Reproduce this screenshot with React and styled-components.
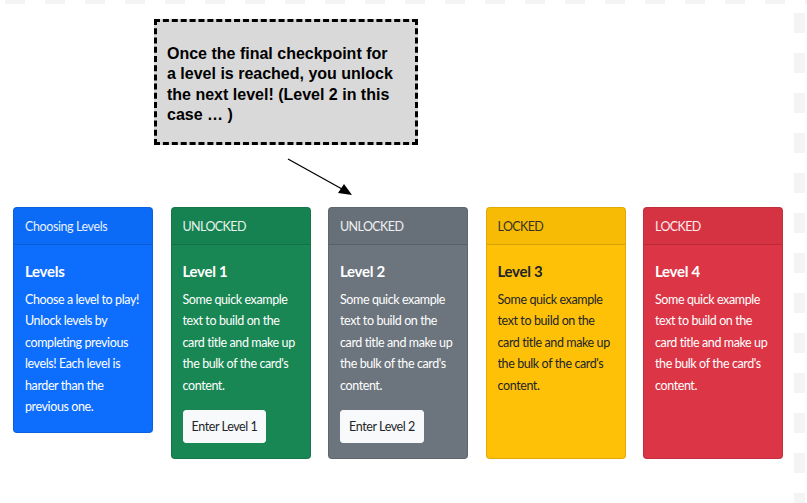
import React from 'react'
import styled, {createGlobalStyle} from "styled-components";

const GlobalStyle = createGlobalStyle`
    html, body, #root {
        height: 100%;
    }
    body {
        margin: 0;
        font-family: Lato, "Open Sans", sans-serif;
        background-color: #fff;
        background-image:
            repeating-linear-gradient(90deg, transparent 0 5px, #f4f4f4 5px 25px, transparent 25px 40px),
            repeating-linear-gradient(180deg, transparent 0 13px, #f4f4f4 13px 33px, transparent 33px 40px);
        background-size: 100% 4px, 11px 100%;
        background-position: 0 0, 794px 0;
        background-repeat: no-repeat;
    }
`;

const Page = styled.div`
    display: flex;
    flex-direction: column;
`;

const Annotation = styled.div`
    height: 207px;
    display: flex;
    flex-direction: column;
`;

const Callout = styled.div`
    margin: 19px 0 0 154px;
    width: 264px;
    height: 126px;
    box-sizing: border-box;
    background: #d9d9d9;
    border: 3px dashed #000;
    padding: 22px 17px 0 10px;
    font-family: "Liberation Sans", Arial, sans-serif;
    font-weight: bold;
    font-size: 16px;
    line-height: 20.4px;
    color: #000;
`;

const Arrow = styled.svg`
    margin: 13px 0 0 286px;
    display: block;
`;

const Deck = styled.div`
    display: flex;
    align-items: stretch;
    gap: 17.5px;
    padding-left: 13px;
`;

const palette = {
    primary: {bg: "#0d6efd", fg: "#fff"},
    success: {bg: "#198754", fg: "#fff"},
    secondary: {bg: "#6c757d", fg: "#fff"},
    warning: {bg: "#ffc107", fg: "#212529"},
    danger: {bg: "#dc3545", fg: "#fff"},
};

const Card = styled.div`
    width: 140px;
    box-sizing: border-box;
    background: ${p => palette[p.$variant].bg};
    color: ${p => palette[p.$variant].fg};
    border: 1px solid rgba(0,0,0,.12);
    border-radius: 4px;
    display: flex;
    flex-direction: column;
    align-self: ${p => p.$short ? "flex-start" : "stretch"};
    overflow: hidden;
    letter-spacing: -0.4px;
`;

const CardHeader = styled.div`
    padding: 9px 11px 7px;
    font-size: 12.5px;
    line-height: 20px;
    background: rgba(0,0,0,.03);
    border-bottom: 1px solid rgba(0,0,0,.15);
    opacity: .9;
    letter-spacing: ${p => p.$caps ? "-0.6px" : "-0.4px"};
`;

const CardBody = styled.div`
    padding: 15px 11px 15px;
    flex: 1;
`;

const CardTitle = styled.h5`
    margin: 0 0 7px;
    font-size: 15px;
    font-weight: 700;
    line-height: 22px;
    letter-spacing: -0.3px;
`;

const CardText = styled.p`
    margin: 0;
    font-size: 12.5px;
    line-height: 21.4px;
    & + button {
        margin-top: 14px;
    }
`;

const EnterButton = styled.button`
    display: block;
    background: #f8f9fa;
    color: #212529;
    border: 1px solid #f8f9fa;
    border-radius: 3px;
    padding: 6px 8px;
    font-family: inherit;
    font-size: 12.5px;
    letter-spacing: -0.4px;
    line-height: 19px;
`;

const sample = "Some quick example text to build on the card title and make up the bulk of the card's content.";

const levels = [
    {variant: "success", status: "UNLOCKED", title: "Level 1", button: "Enter Level 1"},
    {variant: "secondary", status: "UNLOCKED", title: "Level 2", button: "Enter Level 2"},
    {variant: "warning", status: "LOCKED", title: "Level 3"},
    {variant: "danger", status: "LOCKED", title: "Level 4"},
];

const App = () => {
    return (
        <Page>
            <GlobalStyle/>
            <Annotation>
                <Callout>
                    Once the final checkpoint for a level is reached, you unlock the next level! (Level 2 in this case … )
                </Callout>
                <Arrow width="70" height="40" viewBox="0 0 70 40">
                    <line x1="2" y1="1" x2="56" y2="31" stroke="#000" strokeWidth="1.3"/>
                    <polygon points="66,37 52,35 58,26" fill="#000"/>
                </Arrow>
            </Annotation>
            <Deck>
                <Card $variant="primary" $short>
                    <CardHeader>Choosing Levels</CardHeader>
                    <CardBody>
                        <CardTitle>Levels</CardTitle>
                        <CardText>Choose a level to play! Unlock levels by completing previous levels! Each level is harder than the previous one.</CardText>
                    </CardBody>
                </Card>
                {levels.map(l => (
                    <Card key={l.title} $variant={l.variant}>
                        <CardHeader $caps>{l.status}</CardHeader>
                        <CardBody>
                            <CardTitle>{l.title}</CardTitle>
                            <CardText>{sample}</CardText>
                            {l.button && <EnterButton>{l.button}</EnterButton>}
                        </CardBody>
                    </Card>
                ))}
            </Deck>
        </Page>
    )
};
export default App;
